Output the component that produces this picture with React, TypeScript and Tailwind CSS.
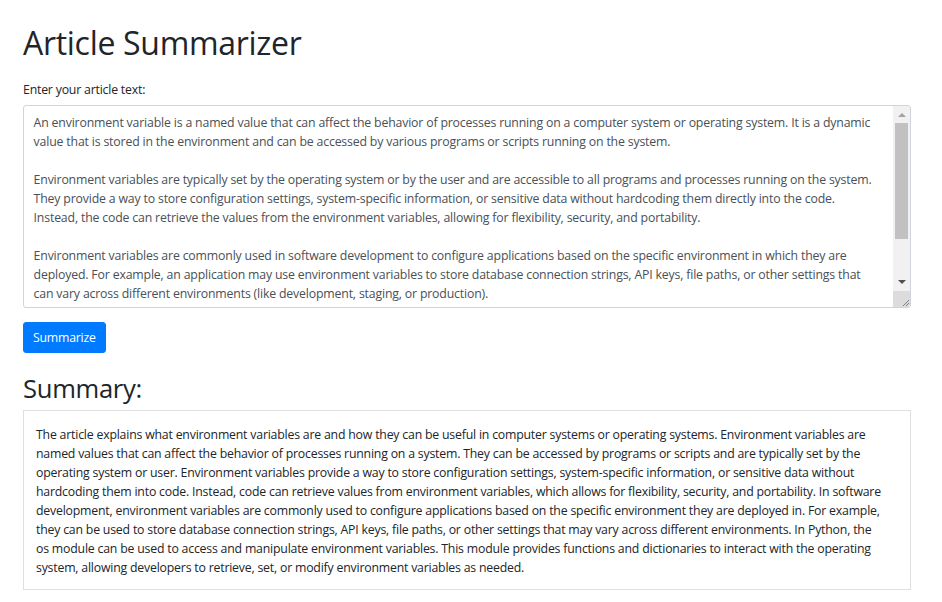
import React, { useState } from "react";

const articleLines = [
  "An environment variable is a named value that can affect the behavior of processes running on a computer system or operating system. It is a dynamic",
  "value that is stored in the environment and can be accessed by various programs or scripts running on the system.",
  "",
  "Environment variables are typically set by the operating system or by the user and are accessible to all programs and processes running on the system.",
  "They provide a way to store configuration settings, system-specific information, or sensitive data without hardcoding them directly into the code.",
  "Instead, the code can retrieve the values from the environment variables, allowing for flexibility, security, and portability.",
  "",
  "Environment variables are commonly used in software development to configure applications based on the specific environment in which they are",
  "deployed. For example, an application may use environment variables to store database connection strings, API keys, file paths, or other settings that",
  "can vary across different environments (like development, staging, or production).",
  "",
  "In Python, you can access environment variables using the os module. The os module provides functions and dictionaries to interact with the operating",
  "system, including retrieving, setting, and modifying environment variables.",
];

const summaryLines = [
  "The article explains what environment variables are and how they can be useful in computer systems or operating systems. Environment variables are",
  "named values that can affect the behavior of processes running on a system. They can be accessed by programs or scripts and are typically set by the",
  "operating system or user. Environment variables provide a way to store configuration settings, system-specific information, or sensitive data without",
  "hardcoding them into code. Instead, code can retrieve values from environment variables, which allows for flexibility, security, and portability. In software",
  "development, environment variables are commonly used to configure applications based on the specific environment they are deployed in. For example,",
  "they can be used to store database connection strings, API keys, file paths, or other settings that may vary across different environments. In Python, the",
  "os module can be used to access and manipulate environment variables. This module provides functions and dictionaries to interact with the operating",
  "system, allowing developers to retrieve, set, or modify environment variables as needed.",
];

// classic windows-like scrollbar drawn next to the textarea
const FakeScrollbar: React.FC = () => (
  <div className="w-[17px] flex flex-col bg-[#f1f1f1]">
    <div className="h-[17px] flex items-center justify-center">
      <svg width="8" height="5" viewBox="0 0 8 5">
        <path d="M0 5 L4 1 L8 5 Z" fill="#a3a3a3" />
      </svg>
    </div>
    <div className="mx-[2px] h-[116px] bg-[#c1c1c1]" />
    <div className="flex-1" />
    <div className="h-[17px] flex items-center justify-center">
      <svg width="8" height="5" viewBox="0 0 8 5">
        <path d="M0 0 L8 0 L4 4 Z" fill="#505050" />
      </svg>
    </div>
    <div className="h-[16px] bg-[#dcdcdc] flex items-end justify-end">
      <svg width="10" height="10" viewBox="0 0 10 10">
        <path d="M9 3 L3 9 M9 6 L6 9" stroke="#808080" strokeWidth="1" />
      </svg>
    </div>
  </div>
);

const App: React.FC = () => {
  const [article, setArticle] = useState(articleLines.join("\n"));

  return (
    <div className="min-h-screen bg-white text-[#212529] font-['Open_Sans',sans-serif]">
      <div className="px-[23px] pt-[24px] w-[934px]">
        <h1 className="text-[32px] leading-[38px] font-medium mb-[18px] tracking-[-0.3px]">Article Summarizer</h1>

        <label className="block text-[12.3px] leading-[19px] tracking-[-0.2px] mb-[6px]">Enter your article text:</label>
        <div className="flex h-[203px] border border-[#ced4da] rounded-[3px] overflow-hidden">
          <textarea
            value={article}
            wrap="off"
            onChange={(e) => setArticle(e.target.value)}
            className="flex-1 resize-none overflow-hidden whitespace-pre px-[9.6px] pt-[7px] pb-[3px] text-[12.3px] leading-[19px] tracking-[-0.17px] text-[#495057] outline-none"
          />
          <FakeScrollbar />
        </div>

        <button className="mt-[14px] bg-[#007bff] text-white text-[12.3px] leading-[19.2px] tracking-[-0.22px] px-[9px] py-[5px] rounded-[3px] border border-[#007bff]">
          Summarize
        </button>

        <h2 className="mt-[20px] text-[25.6px] leading-[31px] font-medium mb-[6px] tracking-[-0.3px]">Summary:</h2>
        <div className="border border-[#dfdfdf] px-3 pt-[14px] pb-3 text-[12.3px] leading-[19px] tracking-[-0.2px]">
          {summaryLines.map((line, i) => (
            <div key={i} className="whitespace-nowrap">{line}</div>
          ))}
        </div>
      </div>
    </div>
  );
};

export default App;
